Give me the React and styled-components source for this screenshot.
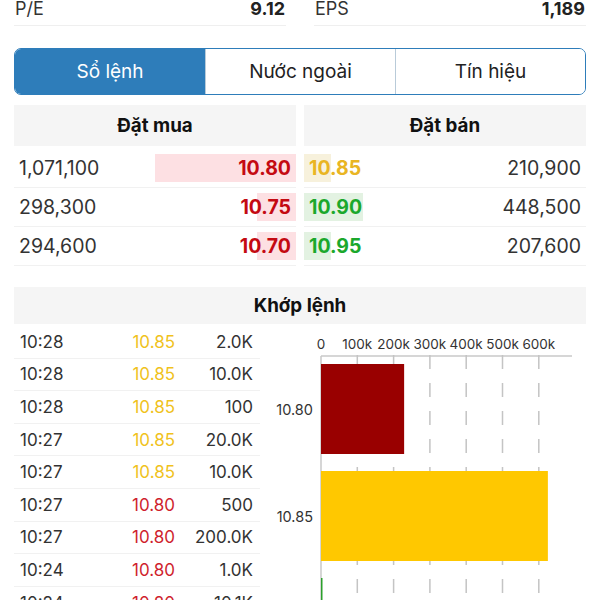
import React from 'react'
import styled, { createGlobalStyle } from 'styled-components';

const GlobalStyle = createGlobalStyle`
    html, body {
        margin: 0;
        padding: 0;
        overflow: hidden;
        background: #fff;
    }
    body {
        font-family: Inter, "Liberation Sans", Arial, sans-serif;
        color: #333;
    }
`

const Page = styled.div`
    width: 600px;
    padding: 0 14px;
    box-sizing: border-box;
`

const StatGrid = styled.div`
    margin-top: -9px;
    display: grid;
    grid-template-columns: 1fr 1fr;
    column-gap: 28px;
`

const StatCell = styled.div`
    height: 34px;
    display: flex;
    align-items: center;
    justify-content: space-between;
    padding: 0 1px;
    border-bottom: 1px solid #efefef;
    font-size: 18px;
`

const StatValue = styled.span`
    font-weight: 700;
    color: #222;
`

const Tabs = styled.div`
    margin-top: 22px;
    height: 47px;
    box-sizing: border-box;
    border: 1px solid #2e7dba;
    border-radius: 7px;
    overflow: hidden;
    display: grid;
    grid-template-columns: repeat(3, 1fr);
`

const Tab = styled.div`
    display: flex;
    align-items: center;
    justify-content: center;
    font-size: 19px;
    color: ${props => props.active ? '#fff' : '#222'};
    background: ${props => props.active ? '#2e7dba' : '#fff'};
    & + & {
        border-left: 1px solid ${props => props.active ? '#2e7dba' : '#b9cbd9'};
    }
`

const Book = styled.div`
    margin-top: 10px;
    display: grid;
    grid-template-columns: 1fr 1fr;
    column-gap: 8px;
`

const SectionHeading = styled.div`
    height: ${props => props.h || 41}px;
    display: flex;
    align-items: center;
    justify-content: center;
    background: #f5f5f5;
    font-size: 18.8px;
    font-weight: 700;
    color: #111;
    margin-bottom: ${props => props.gap || 0}px;
`

const BookRow = styled.div`
    position: relative;
    height: 38px;
    display: flex;
    align-items: center;
    justify-content: space-between;
    padding: 0 5px;
    border-bottom: 1px solid #f1f1f1;
    font-size: 19.5px;
`

const DepthBar = styled.div`
    position: absolute;
    top: 5px;
    bottom: 5px;
    ${props => props.side === 'bid' ? 'right: 0;' : 'left: 0;'}
    background: ${props => props.color};
`

const Qty = styled.span`
    position: relative;
    color: #333;
`

const Price = styled.span`
    position: relative;
    font-weight: 700;
    color: ${props => props.color};
`

const MatchSection = styled.div`
    margin-top: 21px;
`

const MatchBody = styled.div`
    display: grid;
    grid-template-columns: 246px 1fr;
`

const TradeList = styled.div`
    padding-top: 2px;
`

const TradeRow = styled.div`
    height: 31.6px;
    display: grid;
    grid-template-columns: 75px 80px 78px;
    align-items: center;
    padding: 0 7px 0 6px;
    border-bottom: 1px solid #f1f1f1;
    font-size: 17px;
`

const TradeCell = styled.span`
    text-align: ${props => props.align || 'left'};
    color: ${props => props.color || '#333'};
`

const ChartBox = styled.div`
    height: 290px;
    & svg {
        display: block;
    }
`

const RED = '#c40a12';
const YELLOW = '#e9b523';
const GREEN = '#1ba82c';

const bids = [
    { qty: '1,071,100', price: '10.80', depth: 141 },
    { qty: '298,300', price: '10.75', depth: 39 },
    { qty: '294,600', price: '10.70', depth: 39 },
];

const asks = [
    { qty: '210,900', price: '10.85', depth: 27, color: YELLOW, bg: '#f7f1dc' },
    { qty: '448,500', price: '10.90', depth: 59, color: GREEN, bg: '#e3f2e2' },
    { qty: '207,600', price: '10.95', depth: 27, color: GREEN, bg: '#e3f2e2' },
];

const TRADE_YELLOW = '#f0c21c';
const TRADE_RED = '#cf1f2e';

const trades = [
    ['10:28', '10.85', '2.0K', TRADE_YELLOW],
    ['10:28', '10.85', '10.0K', TRADE_YELLOW],
    ['10:28', '10.85', '100', TRADE_YELLOW],
    ['10:27', '10.85', '20.0K', TRADE_YELLOW],
    ['10:27', '10.85', '10.0K', TRADE_YELLOW],
    ['10:27', '10.80', '500', TRADE_RED],
    ['10:27', '10.80', '200.0K', TRADE_RED],
    ['10:24', '10.80', '1.0K', TRADE_RED],
    ['10:24', '10.80', '10.1K', TRADE_RED],
];

const volumes = [
    { price: '10.80', vol: 229000, color: '#990000' },
    { price: '10.85', vol: 625000, color: '#ffc800' },
    { price: '10.90', vol: 3000, color: '#2ca02c' },
];

const chartFont = "Inter, 'Liberation Sans', sans-serif";

const VolumeChart = () => {
    const x0 = 61;
    const step = 36.3;
    const axisY = 32;
    const band = 107;
    const ticks = [0, 1, 2, 3, 4, 5, 6];
    return (
        <svg width="326" height="290">
            {ticks.map(i => (
                <text key={'t' + i} x={x0 + i * step} y={25} textAnchor="middle"
                    fontSize="13.5" fill="#333" fontFamily={chartFont}>
                    {i === 0 ? '0' : `${i}00k`}
                </text>
            ))}
            <line x1={x0} y1={axisY} x2={312} y2={axisY} stroke="#c8c8c8" strokeWidth="1.5" />
            {ticks.slice(1).map(i => (
                <line key={'g' + i} x1={x0 + i * step} y1={31} x2={x0 + i * step} y2={290}
                    stroke="#c4c4c4" strokeWidth="1.5" strokeDasharray="14 14" />
            ))}
            <line x1={x0} y1={axisY} x2={x0} y2={290} stroke="#c8c8c8" strokeWidth="1.5" />
            {volumes.map((v, i) => {
                const top = axisY + 8 + i * band;
                const w = Math.max(1.5, v.vol / 100000 * step);
                return (
                    <g key={v.price}>
                        <rect x={x0} y={top} width={w} height={90} fill={v.color} />
                        {i < 2 && (
                            <text x={53} y={top + 51} textAnchor="end" fontSize="14.5" fill="#333"
                                fontFamily={chartFont}>
                                {v.price}
                            </text>
                        )}
                    </g>
                )
            })}
        </svg>
    )
}

const App = () => {
    return (
        <Page>
            <GlobalStyle />
            <StatGrid>
                <StatCell><span>P/E</span><StatValue>9.12</StatValue></StatCell>
                <StatCell><span>EPS</span><StatValue>1,189</StatValue></StatCell>
            </StatGrid>
            <Tabs>
                <Tab active>Sổ lệnh</Tab>
                <Tab>Nước ngoài</Tab>
                <Tab>Tín hiệu</Tab>
            </Tabs>
            <Book>
                <div>
                    <SectionHeading gap={3}>Đặt mua</SectionHeading>
                    {bids.map(b => (
                        <BookRow key={b.price}>
                            <DepthBar side="bid" color="#fde0e3" style={{ width: b.depth }} />
                            <Qty>{b.qty}</Qty>
                            <Price color={RED}>{b.price}</Price>
                        </BookRow>
                    ))}
                </div>
                <div>
                    <SectionHeading gap={3}>Đặt bán</SectionHeading>
                    {asks.map(a => (
                        <BookRow key={a.price}>
                            <DepthBar side="ask" color={a.bg} style={{ width: a.depth }} />
                            <Price color={a.color}>{a.price}</Price>
                            <Qty>{a.qty}</Qty>
                        </BookRow>
                    ))}
                </div>
            </Book>
            <MatchSection>
                <SectionHeading h={37}>Khớp lệnh</SectionHeading>
                <MatchBody>
                    <TradeList>
                        {trades.map(([time, price, vol, color], i) => (
                            <TradeRow key={i}>
                                <TradeCell>{time}</TradeCell>
                                <TradeCell align="right" color={color}>{price}</TradeCell>
                                <TradeCell align="right">{vol}</TradeCell>
                            </TradeRow>
                        ))}
                    </TradeList>
                    <ChartBox>
                        <VolumeChart />
                    </ChartBox>
                </MatchBody>
            </MatchSection>
        </Page>
    )
}

export default App
